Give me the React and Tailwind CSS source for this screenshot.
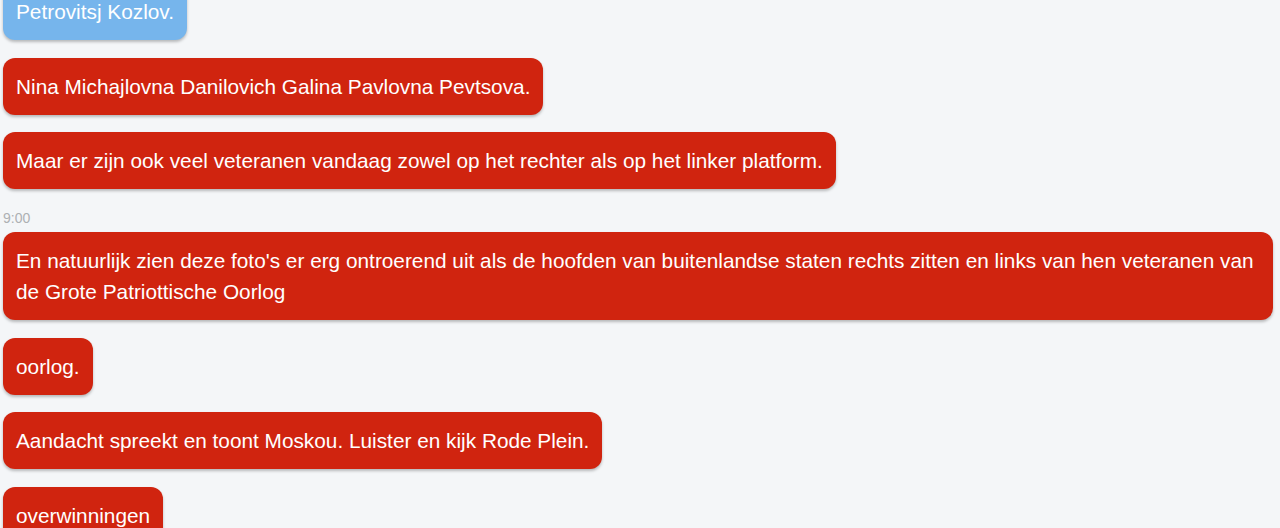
export default function App() {
  const messages = [
    { text: "Petrovitsj Kozlov.", color: "blue" },
    { text: "Nina Michajlovna Danilovich Galina Pavlovna Pevtsova." },
    {
      text: "Maar er zijn ook veel veteranen vandaag zowel op het rechter als op het linker platform.",
    },
    { time: "9:00" },
    {
      text: "En natuurlijk zien deze foto's er erg ontroerend uit als de hoofden van buitenlandse staten rechts zitten en links van hen veteranen van de Grote Patriottische Oorlog",
    },
    { text: "oorlog." },
    { text: "Aandacht spreekt en toont Moskou. Luister en kijk Rode Plein." },
    { text: "overwinningen" },
  ];

  return (
    <div className="h-[528px] overflow-hidden bg-[#f4f6f8] font-['Liberation_Sans',Arial,sans-serif]">
      <div className="flex flex-col items-start gap-[17.5px] pl-[3px] pr-[7px] mt-[-17px]">
        {messages.map((m, i) =>
          m.time ? (
            <div key={i} className="mt-[3px] -mb-[11px] text-[14px] leading-[16px] text-[#adb0b3]">
              {m.time}
            </div>
          ) : (
            <div
              key={i}
              className={
                (m.color === "blue" ? "bg-[#76b5ec]" : "bg-[#d0240f]") +
                " rounded-[12px] px-[13px] py-[13px] text-[20.8px] leading-[31px] text-white shadow-[0_2px_3px_rgba(0,0,0,0.25)]"
              }
            >
              {m.text}
            </div>
          )
        )}
      </div>
    </div>
  );
}
